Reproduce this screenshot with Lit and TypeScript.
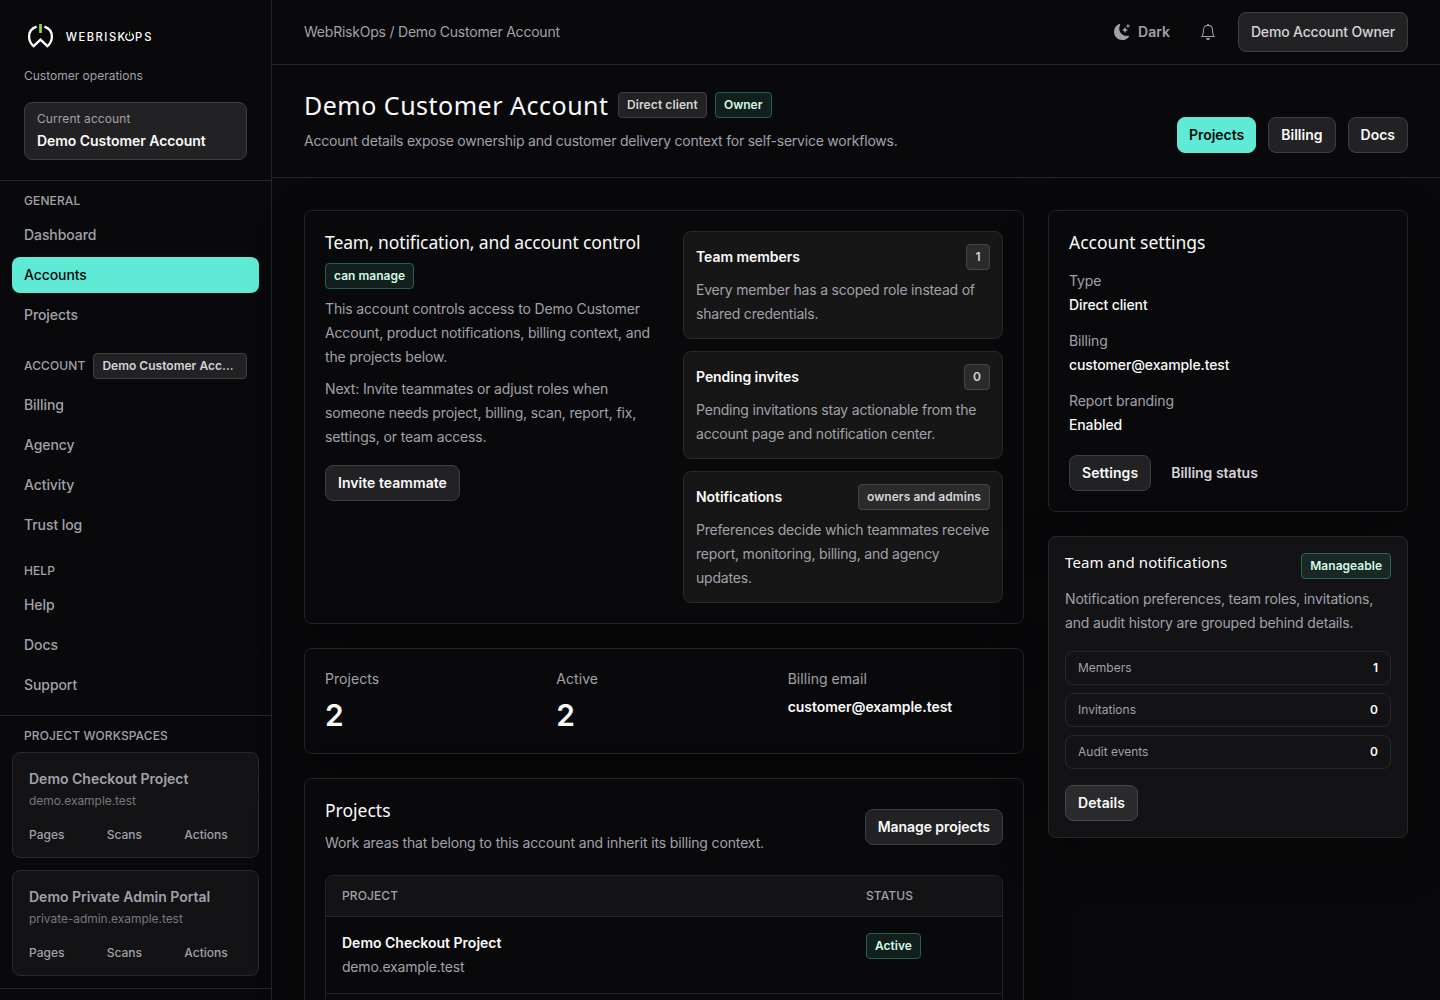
import { LitElement, html, css, svg } from "lit";
import { customElement } from "lit/decorators.js";
import { classMap } from "lit/directives/class-map.js";

const general = ["Dashboard", "Accounts", "Projects"];
const account = ["Billing", "Agency", "Activity", "Trust log"];
const help = ["Help", "Docs", "Support"];
const workspaces = [
  { name: "Demo Checkout Project", host: "demo.example.test" },
  { name: "Demo Private Admin Portal", host: "private-admin.example.test" },
];
const panels = [
  { title: "Team members", tag: "1", text: "Every member has a scoped role instead of shared credentials." },
  { title: "Pending invites", tag: "0", text: "Pending invitations stay actionable from the account page and notification center." },
  { title: "Notifications", tag: "owners and admins", text: "Preferences decide which teammates receive report, monitoring, billing, and agency updates." },
];
const settings = [
  ["Type", "Direct client"],
  ["Billing", "customer@example.test"],
  ["Report branding", "Enabled"],
];
const counts = [
  ["Members", "1"],
  ["Invitations", "0"],
  ["Audit events", "0"],
];

const brand = svg`
  <path d="M36.6 26.6C31.5 28.3 28.900 32.2 29.100 37c.1 3.900 2 7 4.500 9.200l6.900-6.600 6.900 6.600c2.500-2.200 4.400-5.300 4.500-9.200.2-4.800-2.400-8.700-7.500-10.400" fill="none" stroke="#fff" stroke-width="2.300"/>
  <rect x="39.200" y="24" width="2.600" height="9" fill="#9be02a"/>
  <rect x="59" y="31" width="1" height="6" fill="#151517"/>
  <text class="word" x="65.800" y="40.800" textLength="59.500" lengthAdjust="spacing">WEBRISK</text>
  <path d="M127.500 33.700a3.900 3.700 0 1 0 4.200 0" fill="none" stroke="#fff" stroke-width="1.300"/>
  <rect x="129" y="31.500" width="1.200" height="4.500" fill="#9be02a"/>
  <text class="word" x="135" y="40.800" textLength="16.500" lengthAdjust="spacing">PS</text>`;

@customElement("app-root")
export class AppRoot extends LitElement {
  static styles = css`
    :host {
      display: block;
      height: 1000px;
      overflow: hidden;
      background: #09090b;
      color: #fafafa;
      font: 400 14px/20px Inter, sans-serif;
    }
    * { box-sizing: border-box; }
    h1, h2, h3, p { margin: 0; }
    h1, h2, h3 { font-family: "Noto Sans", sans-serif; font-weight: 450; }
    .app { display: flex; height: 1000px; }
    .sidebar { width: 272px; flex: none; border-right: 1px solid #242427; }
    .side-head { padding: 24px 24px 20px; border-bottom: 1px solid #242427; height: 181px; }
    .logo { display: block; margin: -24px 0 0 -24px; }
    .word { font: 500 11.200px Inter, sans-serif; fill: #fff; }
    .ops { font-size: 12px; line-height: 16px; color: #a1a1aa; margin-top: 8px; }
    .current { margin-top: 18px; border: 1px solid #3f3f42; background: #222224; border-radius: 8px; padding: 8px 12px; display: flex; flex-direction: column; gap: 4px; }
    .current span { font-size: 12px; line-height: 16px; color: #a1a1aa; letter-spacing: 0.1px; }
    .current b { font-weight: 600; letter-spacing: -0.05px; }
    .groups { padding: 12px 12px 12px; display: flex; flex-direction: column; gap: 20px; border-bottom: 1px solid #242427; }
    .group { display: flex; flex-direction: column; gap: 4px; }
    .label { font-size: 12px; line-height: 16px; font-weight: 500; letter-spacing: 0.1px; color: #a1a1aa; text-transform: uppercase; }
    .group-head { display: flex; align-items: center; gap: 8px; padding: 0 12px; margin-bottom: 4px; }
    .group-head .badge { flex: 1; min-width: 0; display: block; overflow: hidden; text-overflow: ellipsis; }
    .item { height: 36px; padding: 8px 12px; border-radius: 8px; font-weight: 500; color: #a1a1aa; letter-spacing: -0.08px; }
    .item.active { background: #5eead4; color: #09090b; }
    .spaces { padding: 12px; display: flex; flex-direction: column; gap: 12px; border-bottom: 1px solid #242427; }
    .spaces > .label { padding-left: 12px; margin-bottom: -4px; }
    .space { border: 1px solid #29292c; background: #131315; border-radius: 8px; padding: 16px; height: 106px; color: #a1a1aa; }
    .space b { display: block; font-weight: 600; }
    .space .host { font-size: 12px; line-height: 16px; margin-top: 4px; color: #77777d; letter-spacing: -0.05px; }
    .links { display: grid; grid-template-columns: repeat(3, 1fr); gap: 20px; margin-top: 18px; font-size: 12px; line-height: 16px; font-weight: 500; }
    .main { flex: 1; min-width: 0; }
    .topbar { height: 65px; border-bottom: 1px solid #242427; padding: 0 32px; display: flex; align-items: center; color: #a1a1aa; }
    .crumbs { flex: 1; letter-spacing: -0.22px; }
    .theme { display: flex; align-items: center; gap: 8px; font-weight: 600; margin-right: 30px; }
    .bell { display: block; margin-right: 22px; }
    .button { display: inline-flex; align-items: center; height: 36px; padding: 0 12px; border: 1px solid #3f3f42; border-radius: 8px; background: #222224; color: #fafafa; font-weight: 600; white-space: nowrap; }
    .owner { height: 40px; font-weight: 500; color: #d4d4d8; letter-spacing: -0.17px; }
    .wide { letter-spacing: 0.08px; }
    .primary { background: #5eead4; border-color: #5eead4; color: #09090b; padding: 0 11px; }
    .plain { color: #d4d4d8; font-weight: 600; }
    .badge { display: inline-flex; justify-content: center; flex: none; height: 26px; border: 1px solid #3f3f42; background: #222224; border-radius: 4px; padding: 4px 8px; font-size: 12px; line-height: 16px; font-weight: 600; letter-spacing: 0.02px; color: #d4d4d8; white-space: nowrap; }
    .green { background: #11201c; border-color: #25604e; color: #d1fae5; }
    .hero { height: 113px; padding: 24px 32px; border-bottom: 1px solid #242427; display: flex; justify-content: space-between; align-items: flex-end; }
    .hero-title { display: flex; align-items: center; gap: 8px; height: 32px; margin-bottom: 8px; }
    .hero h1 { font-size: 25px; line-height: 32px; width: 306px; white-space: nowrap; letter-spacing: 0.5px; }
    .hero-title .badge:nth-child(2) { letter-spacing: 0.1px; }
    .copy { line-height: 24px; color: #a1a1aa; letter-spacing: -0.22px; }
    .actions { display: flex; gap: 12px; }
    .content { padding: 32px; display: grid; grid-template-columns: 720px 360px; gap: 24px; align-items: start; }
    .column { display: flex; flex-direction: column; gap: 24px; }
    .card { border: 1px solid #242427; border-radius: 8px; padding: 20px; background: #09090b; box-shadow: 0 18px 50px rgba(0, 0, 0, 0.25); }
    .card h2 { font-size: 17.500px; line-height: 23px; padding-bottom: 1px; white-space: nowrap; }
    .control { display: grid; grid-template-columns: 334px 320px; gap: 24px; }
    .intro { display: flex; flex-direction: column; align-items: flex-start; gap: 8px; }
    .intro h2 { letter-spacing: -0.12px; }
    .intro .copy { letter-spacing: -0.15px; }
    .intro .button { margin-top: 8px; letter-spacing: 0.04px; }
    .panels { display: flex; flex-direction: column; gap: 12px; }
    .panel { border: 1px solid #29292b; background: #161616; border-radius: 8px; padding: 12px; }
    .panel .copy { letter-spacing: -0.2px; }
    .panel .badge { background: #2b2b2c; border-color: #464648; min-width: 24px; letter-spacing: 0.06px; }
    .panel-head { display: flex; justify-content: space-between; align-items: center; margin-bottom: 8px; font-weight: 600; letter-spacing: -0.05px; }
    .stats { display: grid; grid-template-columns: repeat(3, 1fr); gap: 16px; height: 106px; }
    .stat { display: flex; flex-direction: column; gap: 8px; color: #a1a1aa; letter-spacing: 0.05px; }
    .stat b { color: #fafafa; font-weight: 600; letter-spacing: -0.05px; }
    .stat .big { font-size: 30px; line-height: 36px; }
    .projects-head { display: flex; justify-content: space-between; align-items: center; margin-bottom: 20px; }
    .projects-head .copy { margin-top: 8px; letter-spacing: -0.14px; }
    .projects-head .button { letter-spacing: -0.06px; }
    .table { border: 1px solid #242427; border-radius: 8px; overflow: hidden; }
    .row { display: grid; grid-template-columns: 524px 1fr; padding: 16px; height: 77px; border-bottom: 1px solid #242427; align-items: start; }
    .row.head { background: #131315; height: 41px; padding: 12px 16px; border-bottom-color: #29292c; }
    .row .badge { justify-self: start; }
    .row b { display: block; font-weight: 600; margin-bottom: 4px; }
    .row .host { color: #a1a1aa; letter-spacing: -0.2px; }
    .facts { display: flex; flex-direction: column; gap: 16px; margin: 16px 0 20px; }
    .fact { display: flex; flex-direction: column; gap: 4px; color: #a1a1aa; letter-spacing: -0.12px; }
    .fact b { color: #fafafa; font-weight: 500; }
    .foot { display: flex; align-items: center; gap: 20px; }
    .team { background: #131315; border-color: #29292c; padding: 16px; }
    .team-head { display: flex; justify-content: space-between; align-items: flex-start; margin-bottom: 8px; }
    .team .copy { letter-spacing: -0.16px; }
    .team h3 { font-size: 15px; line-height: 18px; letter-spacing: 0.1px; }
    .team .green { background: #1a2825; border-color: #2b6656; }
    .team .button { background: #2b2b2d; border-color: #464649; }
    .counts { display: flex; flex-direction: column; gap: 8px; margin: 16px 0; }
    .count { display: flex; justify-content: space-between; border: 1px solid #29292c; border-radius: 8px; padding: 8px 12px; font-size: 12px; line-height: 16px; color: #a1a1aa; }
    .count b { color: #fafafa; font-weight: 600; }
  `;

  private items(list: string[]) {
    return list.map((n) => html`<div class=${classMap({ item: true, active: n === "Accounts" })}>${n}</div>`);
  }

  render() {
    return html`<div class="app">
      <aside class="sidebar">
        <div class="side-head">
          <svg class="logo" width="160" height="60" viewBox="0 0 160 60">${brand}</svg>
          <div class="ops">Customer operations</div>
          <div class="current"><span>Current account</span><b>Demo Customer Account</b></div>
        </div>
        <nav class="groups">
          <div class="group"><div class="group-head"><span class="label">General</span></div>${this.items(general)}</div>
          <div class="group">
            <div class="group-head"><span class="label">Account</span><span class="badge">Demo Customer Account</span></div>
            ${this.items(account)}
          </div>
          <div class="group"><div class="group-head"><span class="label">Help</span></div>${this.items(help)}</div>
        </nav>
        <div class="spaces">
          <span class="label">Project workspaces</span>
          ${workspaces.map((w) => html`<div class="space"><b>${w.name}</b>
            <div class="host">${w.host}</div>
            <div class="links"><span>Pages</span><span>Scans</span><span>Actions</span></div></div>`)}
        </div>
      </aside>
      <div class="main">
        <header class="topbar">
          <span class="crumbs">WebRiskOps / Demo Customer Account</span>
          <span class="theme">
            <svg width="16" height="16" viewBox="0 0 16 16" fill="currentColor">
              <path d="M6 .278a.77.77 0 0 1 .08.858 7.200 7.200 0 0 0-.878 3.460c0 4.021 3.278 7.277 7.318 7.277q.792-.001 1.533-.16a.79.79 0 0 1 .81.316.73.73 0 0 1-.031.893A8.350 8.350 0 0 1 8.344 16C3.734 16 0 12.286 0 7.710 0 4.266 2.114 1.312 5.124.06A.75.75 0 0 1 6 .278"/>
              <path d="M10.794 3.148a.217.217 0 0 1 .412 0l.387 1.162c.173.518.579.924 1.097 1.097l1.162.387a.217.217 0 0 1 0 .412l-1.162.387a1.730 1.730 0 0 0-1.097 1.097l-.387 1.162a.217.217 0 0 1-.412 0l-.387-1.162A1.730 1.730 0 0 0 9.310 6.593l-1.162-.387a.217.217 0 0 1 0-.412l1.162-.387a1.730 1.730 0 0 0 1.097-1.097zM13.863.099a.145.145 0 0 1 .274 0l.258.774c.115.346.386.617.732.732l.774.258a.145.145 0 0 1 0 .274l-.774.258a1.160 1.160 0 0 0-.732.732l-.258.774a.145.145 0 0 1-.274 0l-.258-.774a1.160 1.160 0 0 0-.732-.732l-.774-.258a.145.145 0 0 1 0-.274l.774-.258c.346-.115.617-.386.732-.732z"/>
            </svg>Dark</span>
          <svg class="bell" width="16" height="16" viewBox="0 0 16 16" fill="currentColor">
            <path d="M8 16a2 2 0 0 0 2-2H6a2 2 0 0 0 2 2M8 1.918l-.797.161A4 4 0 0 0 4 6c0 .628-.134 2.197-.459 3.742-.16.767-.376 1.566-.663 2.258h10.244c-.287-.692-.502-1.490-.663-2.258C12.134 8.197 12 6.628 12 6a4 4 0 0 0-3.203-3.920zM14.220 12c.223.447.481.801.78 1H1c.299-.199.557-.553.78-1C2.680 10.200 3 6.880 3 6c0-2.420 1.720-4.440 4.005-4.901a1 1 0 1 1 1.990 0A5 5 0 0 1 13 6c0 .880.32 4.200 1.220 6"/>
          </svg>
          <span class="button owner">Demo Account Owner</span>
        </header>
        <section class="hero">
          <div>
            <div class="hero-title"><h1>Demo Customer Account</h1><span class="badge">Direct client</span><span class="badge green">Owner</span></div>
            <p class="copy">Account details expose ownership and customer delivery context for self-service workflows.</p>
          </div>
          <div class="actions"><span class="button primary">Projects</span><span class="button">Billing</span><span class="button">Docs</span></div>
        </section>
        <main class="content">
          <div class="column">
            <section class="card control">
              <div class="intro">
                <h2>Team, notification, and account control</h2>
                <span class="badge green">can manage</span>
                <p class="copy">This account controls access to Demo Customer Account, product notifications, billing context, and the projects below.</p>
                <p class="copy">Next: Invite teammates or adjust roles when someone needs project, billing, scan, report, fix, settings, or team access.</p>
                <span class="button">Invite teammate</span>
              </div>
              <div class="panels">
                ${panels.map((p) => html`<div class="panel"><div class="panel-head"><span>${p.title}</span><span class="badge">${p.tag}</span></div><p class="copy">${p.text}</p></div>`)}
              </div>
            </section>
            <section class="card stats">
              <div class="stat"><span>Projects</span><b class="big">2</b></div>
              <div class="stat"><span>Active</span><b class="big">2</b></div>
              <div class="stat"><span>Billing email</span><b>customer@example.test</b></div>
            </section>
            <section class="card">
              <div class="projects-head">
                <div><h2>Projects</h2><p class="copy">Work areas that belong to this account and inherit its billing context.</p></div>
                <span class="button">Manage projects</span>
              </div>
              <div class="table">
                <div class="row head"><span class="label">Project</span><span class="label">Status</span></div>
                ${workspaces.map((w) => html`<div class="row"><div><b>${w.name}</b><div class="host">${w.host}</div></div><span class="badge green">Active</span></div>`)}
              </div>
            </section>
          </div>
          <div class="column">
            <section class="card">
              <h2>Account settings</h2>
              <div class="facts">${settings.map(([k, v]) => html`<div class="fact"><span>${k}</span><b>${v}</b></div>`)}</div>
              <div class="foot"><span class="button wide">Settings</span><span class="plain">Billing status</span></div>
            </section>
            <section class="card team">
              <div class="team-head"><h3>Team and notifications</h3><span class="badge green">Manageable</span></div>
              <p class="copy">Notification preferences, team roles, invitations, and audit history are grouped behind details.</p>
              <div class="counts">${counts.map(([k, v]) => html`<div class="count"><span>${k}</span><b>${v}</b></div>`)}</div>
              <span class="button wide">Details</span>
            </section>
          </div>
        </main>
      </div>
    </div>`;
  }
}
